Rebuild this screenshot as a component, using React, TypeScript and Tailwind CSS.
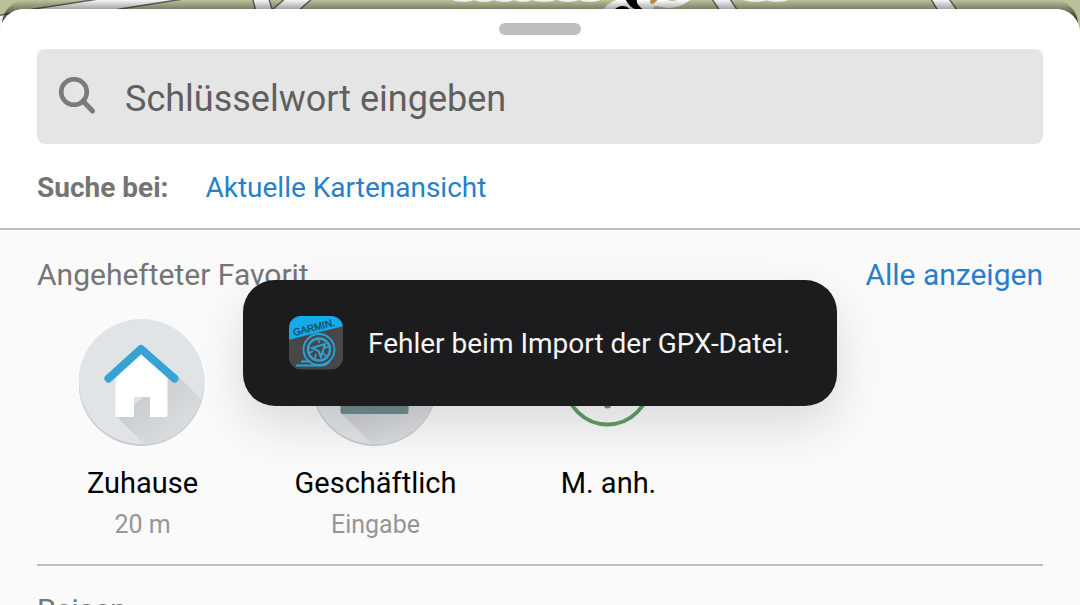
import React from "react";
import type { ReactNode } from "react";

function MapStrip() {
  return (
    <svg
      className="absolute inset-x-0 top-0 h-9 w-full"
      viewBox="0 0 1080 36"
      preserveAspectRatio="none"
      aria-hidden="true"
    >
      <rect width="1080" height="36" fill="#bcc09a" />
      <path d="M-10 17 34 9 92 0 130-6H215L120 9-10 36Z" fill="#f6f6f8" stroke="#62645a" strokeWidth="1.5" />
      <path d="M252-4 256 12H273L268-4ZM288-4 272 10V20H288L315-4Z" fill="#f6f6f8" stroke="#62645a" strokeWidth="1.5" />
      <path d="M710-4 722 14H740L728-4ZM929-4 940 14H960L947-4Z" fill="#f6f6f8" stroke="#62645a" strokeWidth="1.5" />
      <g fill="#f6f6f1">
        <ellipse cx="463" cy="-1" rx="11" ry="3" />
        <ellipse cx="484" cy="-1" rx="10" ry="3" />
        <ellipse cx="504" cy="-1" rx="10" ry="3" />
        <ellipse cx="523" cy="-1" rx="9" ry="3" />
        <ellipse cx="544" cy="-1" rx="12" ry="3" />
        <ellipse cx="568" cy="-1" rx="11" ry="3" />
        <ellipse cx="590" cy="-1" rx="11" ry="3" />
        <ellipse cx="755" cy="-1" rx="12" ry="3" />
        <ellipse cx="777" cy="-1" rx="12" ry="3" />
      </g>
      <path d="M602 12Q607 1 624-2H684Q694-2 690 0 680 8 668 8L655 6 650 12Z" fill="#fff" />
      <path d="M614 10Q620 4 627 7L631 10Z" fill="#000" />
      <path d="M625-2H637Q635 4 644 10H636Q628 6 625-2Z" fill="#000" />
      <path d="M651-2 650 3 653 4 660-2Z" fill="#c58b3c" />
      <path d="M664-2Q672 4 681-2Z" fill="#bcc09a" />
    </svg>
  );
}

function SearchIcon() {
  return (
    <svg className="size-10 shrink-0" viewBox="0 0 40 40" fill="none" stroke="#7b7b7b" aria-hidden="true">
      <circle cx="17" cy="15" r="12.8" strokeWidth="4.6" />
      <path d="M26 24 35.500 34" strokeWidth="5" strokeLinecap="round" />
    </svg>
  );
}

function Disc({ id, children }: { id: string; children: ReactNode }) {
  return (
    <svg className="size-32" viewBox="1 -1 128 128" aria-hidden="true">
      <defs>
        <clipPath id={id}>
          <circle cx="63.500" cy="63.500" r="62" />
        </clipPath>
        <linearGradient id={id + "-shade"} x1="0.2" y1="0.2" x2="0.6" y2="0.6">
          <stop offset="0" stopColor="#cacdd0" />
          <stop offset="1" stopColor="#dcdfe2" />
        </linearGradient>
      </defs>
      <circle cx="63.500" cy="64" r="63" fill="#c9cbcd" />
      <circle cx="63.500" cy="62.500" r="62.5" fill="#e0e4e7" />
      {children}
    </svg>
  );
}

function HomeIcon() {
  return (
    <Disc id="home">
      <path d="M39 98 97 54 157 114 99 158Z" fill="url(#home-shade)" clipPath="url(#home)" />
      <path d="M37.500 59 63 33 89.500 59V96Q89.500 98 87.500 98H72V78H56V98H39.500Q37.500 98 37.500 96Z" fill="#fff" />
      <path d="M30.500 59.500 63 30 96.500 59.500" fill="none" stroke="#37a3d3" strokeWidth="8" strokeLinecap="round" strokeLinejoin="round" />
    </Disc>
  );
}

function WorkIcon() {
  return (
    <Disc id="work">
      <path d="M30 94 98 50 160 112 94 158Z" fill="url(#work-shade)" clipPath="url(#work)" />
      <rect x="29.500" y="42" width="68" height="53" rx="2" fill="#6f8d90" />
      <path d="M50 42V32H78V42" fill="none" stroke="#6f8d90" strokeWidth="6" />
    </Disc>
  );
}

function PinnedIcon() {
  return (
    <svg className="size-32" viewBox="1 -1 128 128" fill="none" stroke="#5f9f62" aria-hidden="true">
      <circle cx="63.500" cy="63.500" r="42" strokeWidth="3.8" />
      <path d="M63.500 44V86" strokeWidth="7" strokeLinecap="round" />
    </svg>
  );
}

function GarminIcon() {
  return (
    <svg className="size-14 shrink-0" viewBox="0 0 56 56" aria-hidden="true">
      <defs>
        <clipPath id="app-tile">
          <rect x="1" y="1" width="54" height="53.500" rx="12" />
        </clipPath>
      </defs>
      <g clipPath="url(#app-tile)">
        <rect width="56" height="56" fill="#474747" />
        <path d="M0 0H56V11L0 25Z" fill="#14aaec" />
      </g>
      <text
        x="6"
        y="21"
        transform="rotate(-14 6 21)"
        fontFamily="Liberation Sans, Arial, sans-serif"
        fontSize="10"
        fill="#154a62"
        stroke="#154a62"
        strokeWidth="0.3"
      >
        GARMIN.
      </text>
      <g fill="none" stroke="#2ba3d6">
        <circle cx="31" cy="34.500" r="15.5" strokeWidth="1.8" />
        <circle cx="31" cy="34.500" r="11" strokeWidth="2.4" />
        <path d="M24 33 37 29 33 42 30.500 36Z" strokeWidth="2" strokeLinejoin="miter" />
        <path d="M30 24 31.500 28M41 31 37 33M39 42 35 38M27 44 28 39M21 38 25 36" strokeWidth="1.6" />
        <path d="M13 46.500H22M8 50.500H32Q38 50.500 42 46" strokeWidth="2" />
      </g>
    </svg>
  );
}

function Favorite({ icon, name, detail }: { icon: ReactNode; name: string; detail?: string }) {
  return (
    <button type="button" className="flex w-[233px] flex-col items-center">
      {icon}
      <span className="mt-[17px] text-[29px] leading-10 text-black">{name}</span>
      {detail && <span className="mt-1 text-[25px] leading-9 text-[#969696]">{detail}</span>}
    </button>
  );
}

export default function App() {
  return (
    <div className="relative h-screen overflow-hidden bg-[#fafafa] font-[Roboto,sans-serif]">
      <MapStrip />
      <div className="absolute inset-x-0.5 top-0 h-6 rounded-t-3xl bg-linear-to-b from-black/0 to-black/90" />
      <main className="relative mt-[9px] overflow-hidden rounded-t-3xl bg-[#fafafa]">
        <header className="border-b-2 border-[#bebebe] bg-white px-[37px] pt-3.5 pb-[22px]">
          <div className="mx-auto h-3 w-[82px] rounded-full bg-[#bdbdbd]" />
          <label className="mt-3.5 flex h-[95px] items-center gap-7 rounded-lg bg-[#e5e5e5] px-5">
            <SearchIcon />
            <input
              type="search"
              aria-label="Schlüsselwort eingeben"
              placeholder="Schlüsselwort eingeben"
              className="min-w-0 flex-1 bg-transparent pt-1 text-[36px] leading-12 outline-none placeholder:text-[#5f5f5f]"
            />
          </label>
          <div className="mt-[26px] flex items-center gap-[37px] text-[28px] leading-9">
            <span className="font-bold text-[#747474]">Suche bei:</span>
            <a href="#karte" className="text-[#267fcb]">Aktuelle Kartenansicht</a>
          </div>
        </header>
        <section className="mx-[37px] border-b-2 border-[#bebebe] pt-[25px] pb-[21px]">
          <div className="flex items-center justify-between text-[30px] leading-10">
            <h2 className="text-[#757575]">Angehefteter Favorit</h2>
            <a href="#alle" className="text-[#267fcb]">Alle anzeigen</a>
          </div>
          <div className="-ml-[11px] mt-[23px] flex items-start">
            <Favorite icon={<HomeIcon />} name="Zuhause" detail="20 m" />
            <Favorite icon={<WorkIcon />} name="Geschäftlich" detail="Eingabe" />
            <Favorite icon={<PinnedIcon />} name="M. anh." />
          </div>
        </section>
        <section className="px-[37px] pt-6">
          <h2 className="text-[30px] leading-10 text-[#757575]">Reisen</h2>
        </section>
      </main>
      <div
        role="alert"
        className="absolute top-[280px] left-1/2 flex h-[126px] w-[594px] -translate-x-1/2 items-center gap-6 rounded-[32px] bg-[#1c1c1e] pl-[45px] text-[28px] leading-9 text-[#f5f5f5] shadow-[0_20px_50px_rgba(0,0,0,0.13)]"
      >
        <GarminIcon />
        <span className="pt-0.5 whitespace-nowrap">Fehler beim Import der GPX-Datei.</span>
      </div>
    </div>
  );
}
